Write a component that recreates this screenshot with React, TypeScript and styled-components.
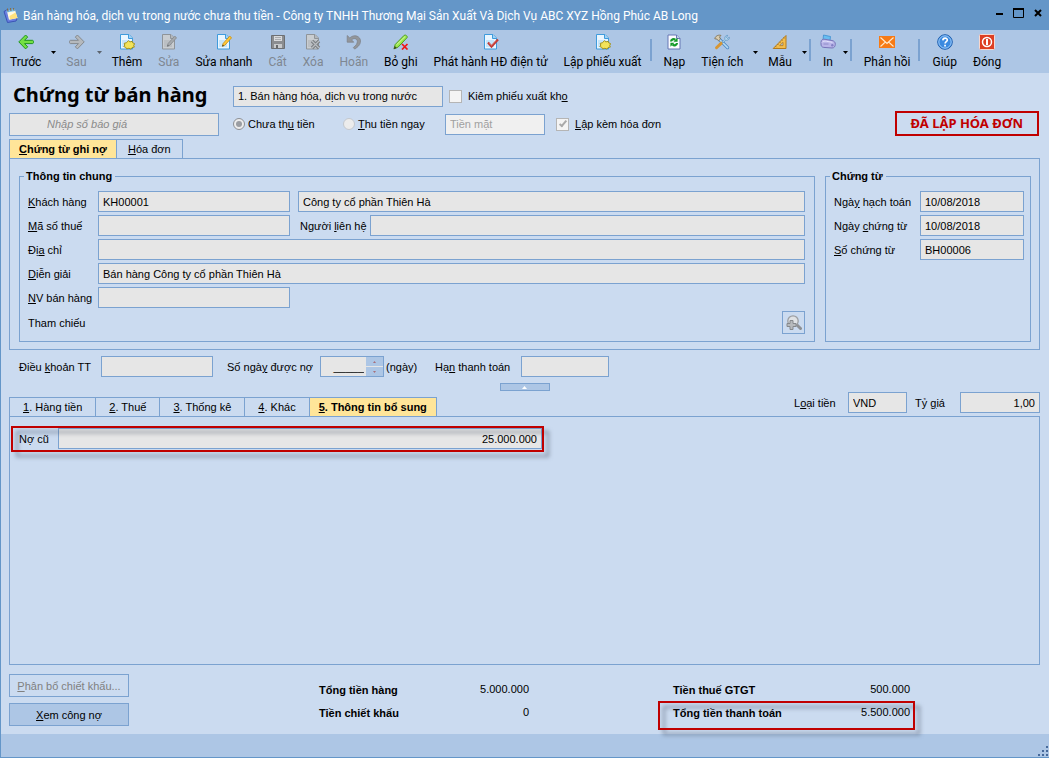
import React from "react";
import styled, { createGlobalStyle, css } from "styled-components";

const color = {
  frame: "#6496c8",
  bar: "#adc6e5",
  body: "#cbdbf0",
  line: "#7ba2d0",
  field: "#e6e6e6",
  active: "#ffe599",
  red: "#c00000",
  muted: "#7f8791",
};

const GlobalStyle = createGlobalStyle`
  *, *::before, *::after { box-sizing: border-box; }
  body { margin: 0; background: ${color.body}; }
  body, button, input, select {
    font-family: "Liberation Sans", Arial, sans-serif;
    font-size: 11px;
    line-height: 14px;
    color: #000;
  }
`;

const uiFont = `Roboto, "Noto Sans", sans-serif`;
const displayFont = `"Noto Sans", "Open Sans", sans-serif`;

/* ---------- window frame ---------- */

const Window = styled.div`
  display: flex;
  flex-direction: column;
  min-height: 100vh;
  background: ${color.body};
  border-left: 1px solid ${color.frame};
  border-bottom: 1px solid ${color.frame};
`;

const TitleBar = styled.header`
  display: flex;
  align-items: center;
  gap: 4px;
  height: 30px;
  padding: 0 4px 0 2px;
  background: ${color.frame};
  color: #fff;
  font-family: ${uiFont};
  font-size: 12px;
`;

const TitleText = styled.span`
  flex: 1;
  padding-top: 2px;
  white-space: nowrap;
`;

const WindowButtons = styled.div`
  display: flex;
  gap: 5px;
  margin-top: -4px;
`;

const WindowButton = styled.button`
  display: grid;
  place-items: center;
  width: 14px;
  height: 14px;
  padding: 0;
  border: 0;
  background: none;
`;

/* ---------- toolbar ---------- */

const Toolbar = styled.nav`
  display: flex;
  height: 43px;
  padding-left: 1px;
  background: ${color.bar};
`;

const ToolGroup = styled.div`
  display: flex;
`;

const ToolButton = styled.button`
  display: flex;
  flex-direction: column;
  align-items: center;
  gap: 4px;
  padding: 4px 8px 0;
  border: 0;
  background: none;
  white-space: nowrap;
  font-family: ${uiFont};
  font-size: 12px;
  line-height: 16px;

  /* the label alone decides the width of the button */
  svg {
    margin: 0 -4px;
  }

  &:disabled {
    color: ${color.muted};
  }
`;

const CaretButton = styled.button`
  width: 9px;
  padding: 0;
  border: 0;
  background: none;
  line-height: 0;
`;

const ToolSeparator = styled.span`
  width: 2px;
  height: 22px;
  margin: 9px 4px 0 0;
  background: ${color.line};
`;

/* ---------- shared form parts ---------- */

const fieldStyle = css`
  height: 21px;
  min-width: 0;
  padding: 0 4px;
  border: 1px solid ${color.line};
  border-radius: 0;
  background: ${color.field};
  outline: none;
`;

const TextField = styled.input<{ $align?: "right" }>`
  ${fieldStyle}
  width: 100%;
  text-align: ${(p) => p.$align ?? "left"};
`;

const SelectField = styled.select`
  ${fieldStyle}
  appearance: none;
  width: 100%;

  &:disabled {
    background: #f0f0f0;
    color: #a0a0a0;
    opacity: 1;
  }
`;

const FieldLabel = styled.label`
  white-space: nowrap;
  padding-top: 1px;
`;

const ChoiceLabel = styled.label`
  display: flex;
  align-items: center;
  gap: 6px;
  white-space: nowrap;
`;

const Radio = styled.input.attrs({ type: "radio" })`
  appearance: none;
  display: grid;
  place-items: center;
  width: 12px;
  height: 12px;
  margin: 0 -3px 0 0;
  border: 1px solid #c4c8ce;
  border-radius: 50%;
  background: #ececec;

  &:checked {
    border-color: #8c8f94;
  }
  &:checked::after {
    content: "";
    width: 6px;
    height: 6px;
    border-radius: 50%;
    background: #9a9da2;
  }
`;

const Checkbox = styled.input.attrs({ type: "checkbox" })`
  appearance: none;
  display: grid;
  place-items: center;
  width: 13px;
  height: 13px;
  margin: 0;
  border: 1px solid #b5b5b5;
  background: #f4f4f4;

  &:checked::after {
    content: "";
    width: 4px;
    height: 8px;
    margin-top: -2px;
    border: solid #a9a9a9;
    border-width: 0 2px 2px 0;
    transform: rotate(40deg);
  }
`;

/* ---------- document header ---------- */

const Content = styled.main`
  display: flex;
  flex-direction: column;
  flex: 1;
  padding: 9px 9px 0 8px;
`;

const DocHeader = styled.section`
  display: grid;
  grid-template-columns: 210px 1fr auto;
  column-gap: 14px;
  align-items: center;
`;

const DocTitle = styled.h1`
  margin: 0;
  padding: 0 0 2px 4px;
  white-space: nowrap;
  font-family: ${displayFont};
  font-size: 20px;
  font-weight: 700;
  line-height: 24px;
`;

const DocOptions = styled.div`
  display: flex;
  align-items: center;
  grid-column: 2 / 4;
  height: 28px;
`;

const PaymentOptions = styled(DocOptions)`
  grid-column: 2;
`;

const OptionSlot = styled.div<{ $width: number; $gap?: number }>`
  display: grid;
  width: ${(p) => p.$width}px;
  margin-right: ${(p) => p.$gap ?? 0}px;
`;

const QuoteField = styled(TextField)`
  height: 23px;
  padding-left: 37px;

  &::placeholder {
    color: #8a8a8a;
    font-style: italic;
    opacity: 1;
  }
`;

const Stamp = styled.strong`
  margin: 0 1px 2px 0;
  padding: 1px 14px 2px;
  border: 2px solid ${color.red};
  color: ${color.red};
  font-family: ${displayFont};
  font-size: 13px;
  line-height: 18px;
`;

/* ---------- tabs and panels ---------- */

const TabList = styled.div`
  display: flex;
  margin-bottom: -1px;
`;

const Tab = styled.button<{ $active?: boolean }>`
  height: 20px;
  margin-right: -1px;
  padding: 0 ${(p) => (p.$active ? 9 : 13)}px;
  border: 1px solid ${color.line};
  background: ${(p) => (p.$active ? color.active : color.body)};
  border-bottom-color: ${(p) => (p.$active ? color.active : color.line)};
  font-weight: ${(p) => (p.$active ? 700 : 400)};
  white-space: nowrap;
`;

const HeaderTabs = styled(TabList)`
  margin-top: 1px;

  ${Tab}:last-child {
    padding: 0 11px;
  }
`;

const MainPanel = styled.section`
  display: grid;
  grid-template-columns: 1fr 206px;
  gap: 10px;
  padding: 10px 8px 7px 9px;
  border: 1px solid ${color.line};
`;

const Group = styled.fieldset<{ $right: number }>`
  min-width: 0;
  margin: 0;
  padding: 8px ${(p) => p.$right}px 7px 8px;
  border: 1px solid ${color.line};
`;

const GroupTitle = styled.legend`
  margin-left: -4px;
  padding: 0 3px 0 2px;
  font-weight: 700;
`;

const FormGrid = styled.div<{ $label: number }>`
  display: grid;
  grid-template-columns: ${(p) => p.$label}px 1fr;
  row-gap: 3px;
  align-items: center;
`;

const FieldRow = styled.div<{ $gap?: number }>`
  display: flex;
  align-items: center;
  gap: ${(p) => p.$gap ?? 8}px;
  min-width: 0;
`;

const ShortSlot = styled.div`
  display: grid;
  flex: 0 0 192px;
  max-width: 192px;
`;

const ContactLabel = styled(FieldLabel)`
  flex: 0 0 80px;
  padding-left: 10px;
`;

const ReferenceRow = styled(FieldRow)`
  justify-content: flex-end;
  height: 23px;
`;

const LookupButton = styled.button`
  display: grid;
  place-items: center;
  width: 23px;
  height: 23px;
  padding: 0;
  border: 1px solid ${color.line};
  background: ${color.body};
`;

/* ---------- payment terms ---------- */

const TermsRow = styled.section`
  display: flex;
  align-items: center;
  padding: 6px 0 0 10px;
`;

const TermsLabel = styled(FieldLabel)<{ $width: number }>`
  width: ${(p) => p.$width}px;
`;

const Spinner = styled.div`
  display: flex;
  width: 64px;
  height: 21px;
  border: 1px solid ${color.line};
  background: ${color.field};

  input {
    flex: 1;
    min-width: 0;
    padding: 0 2px;
    border: 0;
    background: none;
    text-align: right;
  }
`;

const SpinnerButtons = styled.div`
  display: grid;
  grid-template-rows: 1fr 1fr;
  gap: 1px;
  width: 17px;

  button {
    display: grid;
    place-items: center;
    padding: 0;
    border: 0;
    background: ${color.bar};
    line-height: 0;
  }
`;

const DaysUnit = styled.span`
  width: 51px;
  padding: 1px 0 0 2px;
`;

const CollapseButton = styled.button`
  display: grid;
  place-items: center;
  align-self: center;
  width: 50px;
  height: 8px;
  margin-top: 6px;
  padding: 0;
  border: 1px solid ${color.line};
  background: ${color.bar};
`;

/* ---------- detail area ---------- */

const DetailBar = styled.div`
  display: flex;
  align-items: flex-end;
  justify-content: space-between;
`;

const CurrencyRow = styled(FieldRow)`
  padding: 1px 0 3px;
`;

const DetailPanel = styled.section`
  flex: 1;
  min-height: 120px;
  padding: 9px 1px;
  border: 1px solid ${color.line};
`;

const redFrame = css`
  position: relative;

  &::after {
    content: "";
    position: absolute;
    inset: 0;
    border: 2px solid ${color.red};
    filter: drop-shadow(5px 5px 2px rgba(60, 70, 90, 0.55));
    pointer-events: none;
  }
`;

const OldDebt = styled.div`
  ${redFrame}
  display: flex;
  align-items: center;
  gap: 9px;
  width: 533px;
  max-width: 100%;
  padding: 2px 2px 3px 8px;
`;

/* ---------- totals ---------- */

const Summary = styled.section`
  display: flex;
  justify-content: space-between;
  padding: 9px 125px 4px 0;
`;

const ActionColumn = styled.div`
  display: flex;
  flex-direction: column;
  gap: 6px;
`;

const ActionButton = styled.button`
  width: 120px;
  height: 23px;
  padding: 0;
  border: 1px solid ${color.line};
  background: ${color.bar};

  &:disabled {
    background: ${color.body};
    color: #808080;
  }
`;

const Totals = styled.dl`
  display: grid;
  grid-template-columns: 230px 257px;
  column-gap: 124px;
  margin: 0;
`;

const Total = styled.div<{ $marked?: boolean }>`
  display: flex;
  justify-content: space-between;
  padding: 8px 5px 0 15px;
  height: 27px;
  ${(p) =>
    p.$marked &&
    css`
      ${redFrame}
      height: 29px;
    `}

  &:nth-child(n + 3) {
    padding-top: 4px;
  }

  dt {
    font-weight: 700;
    padding-top: 1px;
  }
  dd {
    margin: 0;
  }
`;

const StatusBar = styled.footer`
  display: flex;
  align-items: flex-end;
  justify-content: flex-end;
  height: 23px;
  background: ${color.bar};
`;

/* ---------- icons ---------- */

const Svg = ({ children, w = 16, h = 16 }: { children: React.ReactNode; w?: number; h?: number }) => (
  <svg width={w} height={h} viewBox={`0 0 ${w} ${h}`} fill="none" aria-hidden="true">
    {children}
  </svg>
);

const Arrow = ({ fill, stroke }: { fill: string; stroke: string }) => (
  <path
    d="M7.6 1 .8 7.900l6.800 7 2.100-2.100-3.200-3.200h8c.7 0 1-.6 1-1.600s-.3-1.700-1-1.700h-8l3.200-3.200z"
    fill={fill}
    stroke={stroke}
    strokeLinejoin="round"
  />
);

const Page = ({ gray }: { gray?: boolean }) => (
  <>
    <path
      d="M1.5.5H10L13.5 4v11h-12z"
      fill={gray ? "#c9cdd1" : "#eaf6ff"}
      stroke={gray ? "#8f9499" : "#3f9bdc"}
    />
    <path d="M9.5.5v4h4" fill={gray ? "#b4b8bc" : "#9fd2f5"} stroke={gray ? "#8f9499" : "#3f9bdc"} />
    <path d="M3 6h8v7H3z" fill={gray ? "#bbbfc3" : "#c5e5fb"} />
  </>
);

const Pencil = ({ gray }: { gray?: boolean }) => (
  <>
    <path
      d="m6.4 12.2.8-2.8 6.2-6.9c.6-.6 2.4 1 1.8 1.7l-6.3 7z"
      fill={gray ? "#a6aaae" : "#ffc93c"}
      stroke={gray ? "#84888c" : "#c48a12"}
      strokeWidth=".8"
    />
    <path d="m6 12.6.7-2 1.4 1.3z" fill={gray ? "#6e7276" : "#54401a"} />
  </>
);

const Star = () => (
  <path
    d="m9.5 6.7 1.4 1.2 2.3-.6.5 1.5 2 .9-1 1.6.6 1.8-2.2.4-1.1 1.6-2.1-.8-2.3.6-.8-1.5-2-.8 1-1.5-.6-1.8 2.1-.5z"
    fill="#f2e35a"
    stroke="#a0901e"
  />
);

const icons: Record<string, React.ReactNode> = {
  back: <Arrow fill="#74e043" stroke="#1f9420" />,
  next: (
    <g transform="matrix(-1 0 0 1 16 0)">
      <Arrow fill="#b5b9bd" stroke="#84898e" />
    </g>
  ),
  add: (
    <>
      <Page />
      <Star />
    </>
  ),
  edit: (
    <>
      <Page gray />
      <Pencil gray />
    </>
  ),
  quickEdit: (
    <>
      <Page />
      <Pencil />
    </>
  ),
  save: (
    <>
      <path d="M1.5 1.5h13v13h-13z" fill="#8b8d90" stroke="#6d6f72" />
      <path d="M4 2h8v5H4z" fill="#d9dadc" />
      <path d="M5 3.5h6M5 5.5h6" stroke="#a9abae" />
      <path d="M4 10h8v4H4z" fill="#c7c9cb" />
      <path d="M6 11h2v3H6z" fill="#66686b" />
    </>
  ),
  remove: (
    <>
      <Page gray />
      <path d="m7 7 7 7M14 7l-7 7" stroke="#7b7f83" strokeWidth="3.4" />
      <path d="m7 7 7 7M14 7l-7 7" stroke="#b9bdc1" strokeWidth="1.2" />
    </>
  ),
  undo: (
    <path
      d="M1.2 1.5v6.7h6.6L5.6 5.9c2-2 5.6-1.7 5.7 1.5.1 2.3-1.5 4.3-4 6.2l1.4 1.5c3.4-2.2 5.900-4.6 5.800-8.1C14.4 2 8-.2 3.800 3.900z"
      fill="#92969b"
      stroke="#7c8085"
      strokeWidth=".7"
    />
  ),
  unpost: (
    <>
      <path d="m1 14.8 1.2-4.3 9-9.2c1.200-1 3.700 1 2.900 2.300l-9 9.500z" fill="#9be84d" stroke="#4f9e1d" />
      <path d="m3.5 10.8 8.8-8.5" stroke="#d4f9a5" />
      <path d="m.6 15.2 1.2-3.2 2 1.9z" fill="#3d4a1c" />
      <path d="m9 10 5.5 5.5M14.5 10 9 15.5" stroke="#f01414" strokeWidth="1.7" />
    </>
  ),
  publish: (
    <>
      <Page />
      <path d="m5 8.5 3.5 4L15 5.5" stroke="#c03a35" strokeWidth="2.2" />
      <path d="m6 9 2.5 2.5L13 6.5" stroke="#e77a70" strokeWidth=".7" />
    </>
  ),
  reload: (
    <>
      <path d="M2 1h8.5L14 4.5V15H2z" fill="#fbfcff" stroke="#6777b4" />
      <path d="M10.5 1v3.5H14" fill="#c6cdea" stroke="#6777b4" />
      <path d="M5 7.5c.2-2.2 2.8-2.9 4.3-1.6M11 9c-.2 2.2-2.8 2.9-4.3 1.6" stroke="#149a28" strokeWidth="2.2" />
      <path d="M11.6 3.8v4H7.5zM4.4 12.7v-4h4.1z" fill="#149a28" />
    </>
  ),
  tools: (
    <>
      <path d="m5 5 8.6 8.6" stroke="#4b87c2" strokeWidth="3.2" strokeLinecap="round" />
      <path d="m5 5 8.6 8.6" stroke="#b4daf5" strokeWidth="1.6" strokeLinecap="round" />
      <path d="m2.5 13.8 4.8-4.7" stroke="#d79634" strokeWidth="2.9" strokeLinecap="round" />
      <path
        d="m8 8.3 3-3c-.8-2 .5-4 2.7-4l-1.3 2.2 1 1 2-1.2c.2 2.2-1.8 3.4-3.6 2.8L9 9z"
        fill="#bcdcf2"
        stroke="#5490c0"
        strokeWidth=".7"
      />
      <path d="M.8 4.8C1.2 2.2 4 .5 7 1.4L5.5 3l1 2-2 1.8-1.6-1.7z" fill="#d8ccb0" stroke="#7f6c4a" strokeWidth=".8" />
    </>
  ),
  template: (
    <>
      <path d="M14 1.5v13H1.2z" fill="#f3bd4c" stroke="#b37a1c" />
      <path d="M11 8.3v3.3H7.6z" fill="#adc6e5" stroke="#b37a1c" strokeWidth=".8" />
      <path d="m3.5 12.2 1 1m1-3.2 1 1m1-3.2 1 1m1-3.2 1 1m1-3.2 1 1" stroke="#8f5f12" strokeWidth=".7" />
    </>
  ),
  print: (
    <>
      <path d="m3.5 1 7 1.5-.6 5L3 6z" fill="#69bdf0" stroke="#3c8fd0" strokeWidth=".8" />
      <path
        d="M1 8.2C1 5.5 3 5 5 5.3l7 1.200c2.200.4 3.300 1.700 3.300 3.700S14.300 14 12 14l-8.200-.6C1.700 13.200 1 11.800 1 10z"
        fill="#b9b5e8"
        stroke="#7774b8"
      />
      <path d="M2 8.5c1-1.800 2.800-1.500 4.500-1.200l6 1" stroke="#e4e2fb" />
      <path d="M3.5 10h5" stroke="#8f8cc8" />
      <circle cx="12.3" cy="11.3" r="1.2" fill="#8481c4" />
    </>
  ),
  mail: (
    <>
      <path d="M0 2h16v12H0z" fill="#f77a14" />
      <path d="m1.5 3.5 6.5 6 6.5-6M1.5 12.5l5-4.6M14.5 12.5l-5-4.6" stroke="#ffe9c9" strokeWidth="1.2" />
    </>
  ),
  help: (
    <>
      <circle cx="8" cy="8" r="7.3" fill="#3b8ae0" stroke="#1f5fae" />
      <circle cx="8" cy="8" r="6.2" stroke="#a9d2fa" strokeWidth=".9" />
      <path d="M5.8 6.4c.1-3 4.6-2.9 4.5-.3-.1 1.5-2.2 1.6-2.2 3.4" stroke="#fff" strokeWidth="1.6" />
      <path d="M7.2 10.8h1.7v1.7H7.2z" fill="#fff" />
    </>
  ),
  close: (
    <>
      <rect x=".5" y=".5" width="15" height="15" rx="1" fill="#dd3f22" stroke="#f8d7cd" />
      <circle cx="8" cy="8" r="4.5" stroke="#fff" strokeWidth="1.5" />
      <path d="M8 5v6" stroke="#fff" strokeWidth="2" />
    </>
  ),
};

const AppIcon = () => (
  <Svg>
    <path d="m1 4.5 3.500-2 9.500 9.500-1 2-8.500 1.500z" fill="#6a7fe0" stroke="#3b54b4" />
    <path d="m4 4.500 8-1.500 2.500 8-8.500 1.700z" fill="#fffbe2" />
    <path d="m6.500 9 6-3.500 2 5.500-7.500 1.500z" fill="#ffe27c" />
    <path d="m3.500 4.500 8.500-1.500" stroke="#7cc4f0" strokeWidth="2" />
    <path d="M5 4.500 4.500 1.500M8 4 7.500 1M11 3.500 10.500 1" stroke="#8b6a3a" />
  </Svg>
);

const Caret = ({ muted }: { muted?: boolean }) => (
  <Svg w={5} h={3}>
    <path d="M0 0h5L2.5 3z" fill={muted ? "#5c646e" : "#000"} />
  </Svg>
);

/* ---------- text with an underlined access key ---------- */

const Mnemonic = ({ text }: { text: string }) => {
  const at = text.indexOf("&");
  if (at < 0) return <>{text}</>;
  return (
    <span>
      {text.slice(0, at)}
      <u>{text[at + 1]}</u>
      {text.slice(at + 2)}
    </span>
  );
};

type Tool = { label: string; icon: string; disabled?: boolean; menu?: boolean };

const toolGroups: Tool[][] = [
  [
    { label: "Trước", icon: "back", menu: true },
    { label: "Sau", icon: "next", disabled: true, menu: true },
    { label: "Thêm", icon: "add" },
    { label: "Sửa", icon: "edit", disabled: true },
    { label: "Sửa nhanh", icon: "quickEdit" },
    { label: "Cất", icon: "save", disabled: true },
    { label: "Xóa", icon: "remove", disabled: true },
    { label: "Hoãn", icon: "undo", disabled: true },
    { label: "Bỏ ghi", icon: "unpost" },
    { label: "Phát hành HĐ điện tử", icon: "publish" },
    { label: "Lập phiếu xuất", icon: "add" },
  ],
  [
    { label: "Nạp", icon: "reload" },
    { label: "Tiện ích", icon: "tools", menu: true },
    { label: "Mẫu", icon: "template", menu: true },
  ],
  [{ label: "In", icon: "print", menu: true }],
  [{ label: "Phản hồi", icon: "mail" }],
  [
    { label: "Giúp", icon: "help" },
    { label: "Đóng", icon: "close" },
  ],
];

const detailTabs = ["&1. Hàng tiền", "&2. Thuế", "&3. Thống kê", "&4. Khác", "&5. Thông tin bổ sung"];

const documentFields = [
  { id: "posting-date", label: "Ngà&y hạch toán", value: "10/08/2018" },
  { id: "doc-date", label: "Ngày &chứng từ", value: "10/08/2018" },
  { id: "doc-number", label: "&Số chứng từ", value: "BH00006" },
];

export default function App() {
  return (
    <>
      <GlobalStyle />
      <Window>
        <TitleBar>
          <AppIcon />
          <TitleText>
            Bán hàng hóa, dịch vụ trong nước chưa thu tiền - Công ty TNHH Thương Mại Sản Xuất Và Dịch Vụ ABC XYZ Hồng
            Phúc AB Long
          </TitleText>
          <WindowButtons>
            <WindowButton aria-label="Thu nhỏ">
              <Svg w={12} h={12}>
                <path d="M2 6h7v2H2z" fill="#000" />
              </Svg>
            </WindowButton>
            <WindowButton aria-label="Phóng to">
              <Svg w={12} h={12}>
                <path d="M.5 1.5h10v9H.5z" stroke="#000" />
                <path d="M0 1h11v2H0z" fill="#000" />
              </Svg>
            </WindowButton>
            <WindowButton aria-label="Đóng cửa sổ">
              <Svg w={12} h={12}>
                <path d="m3 3 6 6M9 3 3 9" stroke="#000" strokeWidth="2" />
              </Svg>
            </WindowButton>
          </WindowButtons>
        </TitleBar>

        <Toolbar>
          {toolGroups.map((group, index) => (
            <ToolGroup key={index}>
              {index > 0 && <ToolSeparator />}
              {group.map((tool) => (
                <React.Fragment key={tool.label}>
                  <ToolButton disabled={tool.disabled}>
                    <Svg>{icons[tool.icon]}</Svg>
                    {tool.label}
                  </ToolButton>
                  {tool.menu && (
                    <CaretButton aria-label={`${tool.label}: tùy chọn`}>
                      <Caret muted={tool.disabled} />
                    </CaretButton>
                  )}
                </React.Fragment>
              ))}
            </ToolGroup>
          ))}
        </Toolbar>

        <Content>
          <DocHeader>
            <DocTitle>Chứng từ bán hàng</DocTitle>
            <DocOptions>
              <OptionSlot $width={210} $gap={6}>
                <SelectField aria-label="Loại chứng từ">
                  <option>1. Bán hàng hóa, dịch vụ trong nước</option>
                </SelectField>
              </OptionSlot>
              <ChoiceLabel>
                <Checkbox />
                <Mnemonic text="Kiêm phiếu xuất kh&o" />
              </ChoiceLabel>
            </DocOptions>
            <QuoteField placeholder="Nhập số báo giá" aria-label="Nhập số báo giá" />
            <PaymentOptions>
              <OptionSlot $width={110}>
                <ChoiceLabel>
                  <Radio name="payment" defaultChecked />
                  <Mnemonic text="Chưa th&u tiền" />
                </ChoiceLabel>
              </OptionSlot>
              <OptionSlot $width={102}>
                <ChoiceLabel>
                  <Radio name="payment" />
                  <Mnemonic text="&Thu tiền ngay" />
                </ChoiceLabel>
              </OptionSlot>
              <OptionSlot $width={100} $gap={11}>
                <SelectField aria-label="Hình thức thanh toán" disabled>
                  <option>Tiền mặt</option>
                </SelectField>
              </OptionSlot>
              <ChoiceLabel>
                <Checkbox defaultChecked />
                <Mnemonic text="&Lập kèm hóa đơn" />
              </ChoiceLabel>
            </PaymentOptions>
            <Stamp>ĐÃ LẬP HÓA ĐƠN</Stamp>
          </DocHeader>

          <HeaderTabs role="tablist">
            <Tab role="tab" aria-selected $active>
              <Mnemonic text="&Chứng từ ghi nợ" />
            </Tab>
            <Tab role="tab" aria-selected={false}>
              <Mnemonic text="&Hóa đơn" />
            </Tab>
          </HeaderTabs>

          <MainPanel>
            <Group $right={9}>
              <GroupTitle>Thông tin chung</GroupTitle>
              <FormGrid $label={70}>
                <FieldLabel htmlFor="customer">
                  <Mnemonic text="&Khách hàng" />
                </FieldLabel>
                <FieldRow>
                  <ShortSlot>
                    <TextField id="customer" defaultValue="KH00001" />
                  </ShortSlot>
                  <TextField aria-label="Tên khách hàng" defaultValue="Công ty cổ phần Thiên Hà" />
                </FieldRow>

                <FieldLabel htmlFor="tax-code">
                  <Mnemonic text="&Mã số thuế" />
                </FieldLabel>
                <FieldRow $gap={0}>
                  <ShortSlot>
                    <TextField id="tax-code" />
                  </ShortSlot>
                  <ContactLabel htmlFor="contact">
                    <Mnemonic text="Người &liên hệ" />
                  </ContactLabel>
                  <TextField id="contact" />
                </FieldRow>

                <FieldLabel htmlFor="address">
                  <Mnemonic text="Đị&a chỉ" />
                </FieldLabel>
                <TextField id="address" />

                <FieldLabel htmlFor="note">
                  <Mnemonic text="&Diễn giải" />
                </FieldLabel>
                <TextField id="note" defaultValue="Bán hàng Công ty cổ phần Thiên Hà" />

                <FieldLabel htmlFor="seller">
                  <Mnemonic text="&NV bán hàng" />
                </FieldLabel>
                <ShortSlot>
                  <TextField id="seller" />
                </ShortSlot>

                <span>Tham chiếu</span>
                <ReferenceRow>
                  <LookupButton aria-label="Chọn tham chiếu">
                    <Svg>
                      <path d="m11 10 3.5 3.5" stroke="#8d9094" strokeWidth="3" strokeLinecap="round" />
                      <circle cx="7" cy="6" r="5.2" fill="#dfe2e5" stroke="#9b9ea2" strokeWidth="1.3" />
                      <path d="M4 5.5h3v3h3v3H7v3H4v-3H1v-3h3z" fill="#b7babd" stroke="#85888c" />
                    </Svg>
                  </LookupButton>
                </ReferenceRow>
              </FormGrid>
            </Group>

            <Group $right={6}>
              <GroupTitle>Chứng từ</GroupTitle>
              <FormGrid $label={86}>
                {documentFields.map((field) => (
                  <React.Fragment key={field.id}>
                    <FieldLabel htmlFor={field.id}>
                      <Mnemonic text={field.label} />
                    </FieldLabel>
                    <TextField id={field.id} defaultValue={field.value} />
                  </React.Fragment>
                ))}
              </FormGrid>
            </Group>
          </MainPanel>

          <TermsRow>
            <TermsLabel $width={82} htmlFor="terms">
              <Mnemonic text="Điều &khoản TT" />
            </TermsLabel>
            <OptionSlot $width={112} $gap={14}>
              <TextField id="terms" />
            </OptionSlot>
            <TermsLabel $width={93} htmlFor="credit-days">
              <Mnemonic text="Số ngà&y được nợ" />
            </TermsLabel>
            <Spinner>
              <input id="credit-days" defaultValue="_____" />
              <SpinnerButtons>
                <button aria-label="Tăng">
                  <Svg w={3} h={2}>
                    <path d="M0 2h3L1.5 0z" fill="#a8707c" />
                  </Svg>
                </button>
                <button aria-label="Giảm">
                  <Svg w={3} h={2}>
                    <path d="M0 0h3L1.5 2z" fill="#a8707c" />
                  </Svg>
                </button>
              </SpinnerButtons>
            </Spinner>
            <DaysUnit>(ngày)</DaysUnit>
            <TermsLabel $width={86} htmlFor="due-date">
              <Mnemonic text="Hạ&n thanh toán" />
            </TermsLabel>
            <OptionSlot $width={88}>
              <TextField id="due-date" />
            </OptionSlot>
          </TermsRow>

          <CollapseButton aria-label="Thu gọn">
            <Svg w={5} h={3}>
              <path d="M0 3h5L2.5 0z" fill="#fff" />
            </Svg>
          </CollapseButton>

          <DetailBar>
            <TabList role="tablist">
              {detailTabs.map((label, index) => (
                <Tab key={label} role="tab" aria-selected={index === 4} $active={index === 4}>
                  <Mnemonic text={label} />
                </Tab>
              ))}
            </TabList>
            <CurrencyRow>
              <TermsLabel $width={46} htmlFor="currency">
                <Mnemonic text="L&oại tiền" />
              </TermsLabel>
              <OptionSlot $width={59}>
                <SelectField id="currency">
                  <option>VND</option>
                </SelectField>
              </OptionSlot>
              <TermsLabel $width={37} htmlFor="rate">
                <Mnemonic text="Tỷ &giá" />
              </TermsLabel>
              <OptionSlot $width={80}>
                <TextField id="rate" defaultValue="1,00" $align="right" />
              </OptionSlot>
            </CurrencyRow>
          </DetailBar>

          <DetailPanel>
            <OldDebt>
              <FieldLabel htmlFor="old-debt">Nợ cũ</FieldLabel>
              <TextField id="old-debt" defaultValue="25.000.000" $align="right" />
            </OldDebt>
          </DetailPanel>

          <Summary>
            <ActionColumn>
              <ActionButton disabled>
                <Mnemonic text="&Phân bổ chiết khấu..." />
              </ActionButton>
              <ActionButton>
                <Mnemonic text="&Xem công nợ" />
              </ActionButton>
            </ActionColumn>
            <Totals>
              <Total>
                <dt>Tổng tiền hàng</dt>
                <dd>5.000.000</dd>
              </Total>
              <Total>
                <dt>Tiền thuế GTGT</dt>
                <dd>500.000</dd>
              </Total>
              <Total>
                <dt>Tiền chiết khấu</dt>
                <dd>0</dd>
              </Total>
              <Total $marked>
                <dt>Tổng tiền thanh toán</dt>
                <dd>5.500.000</dd>
              </Total>
            </Totals>
          </Summary>
        </Content>

        <StatusBar>
          <Svg w={12} h={12}>
            <path d="M9 1h2v2H9zM9 5h2v2H9zM9 9h2v2H9zM5 5h2v2H5zM5 9h2v2H5zM1 9h2v2H1z" fill="#46699a" />
          </Svg>
        </StatusBar>
      </Window>
    </>
  );
}
